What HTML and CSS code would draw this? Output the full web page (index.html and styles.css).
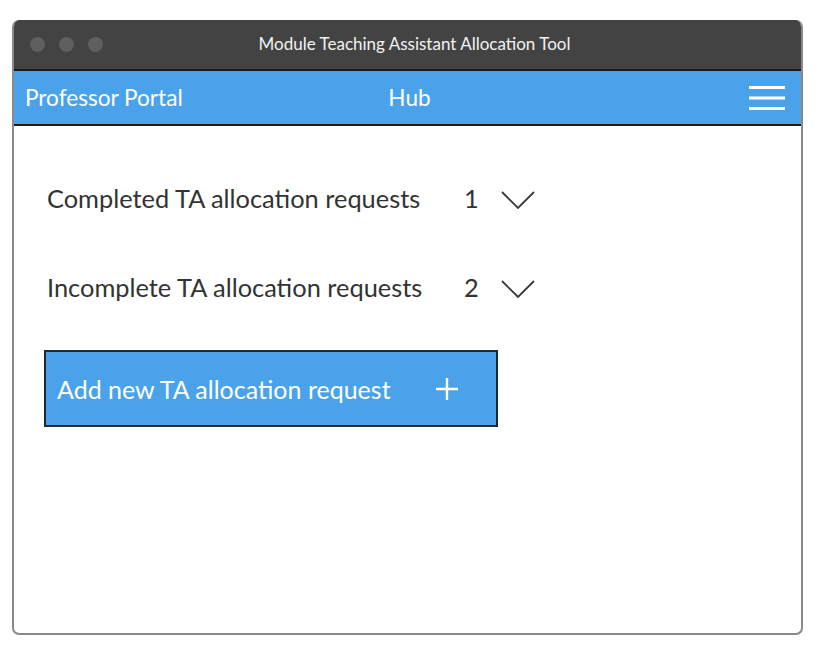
FILE: index.html
```html
<!DOCTYPE html>
<html lang="en">
<head>
<meta charset="utf-8">
<title>Module Teaching Assistant Allocation Tool</title>
<link rel="stylesheet" href="styles.css">
</head>
<body>
<div class="window">
  <div class="titlebar">
    <div class="lights">
      <span class="light"></span><span class="light"></span><span class="light"></span>
    </div>
    <div class="title">Module Teaching Assistant Allocation Tool</div>
  </div>
  <div class="navbar">
    <div class="brand">Professor Portal</div>
    <div class="page">Hub</div>
    <svg class="menu" width="36" height="26" viewBox="0 0 36 26">
      <rect x="0" y="0" width="36" height="3" fill="#fff"/>
      <rect x="0" y="10.5" width="36" height="3" fill="#fff"/>
      <rect x="0" y="21" width="36" height="3" fill="#fff"/>
    </svg>
  </div>
  <div class="content">
    <div class="row">
      <span class="label">Completed TA allocation requests</span>
      <span class="count">1</span>
      <svg class="chev" width="36" height="20" viewBox="0 0 36 20"><path d="M2 2 L18 18 L34 2" fill="none" stroke="#3a3a3a" stroke-width="1.8"/></svg>
    </div>
    <div class="row">
      <span class="label">Incomplete TA allocation requests</span>
      <span class="count">2</span>
      <svg class="chev" width="36" height="20" viewBox="0 0 36 20"><path d="M2 2 L18 18 L34 2" fill="none" stroke="#3a3a3a" stroke-width="1.8"/></svg>
    </div>
    <button class="add">
      <span>Add new TA allocation request</span>
      <svg width="24" height="24" viewBox="0 0 24 24"><path d="M12 1 V23 M1 12 H23" stroke="#fff" stroke-width="2.4"/></svg>
    </button>
  </div>
</div>
</body>
</html>
```

FILE: styles.css
```css
* { box-sizing: border-box; }
body {
  margin: 0;
  background: #fff;
  font-family: "Source Sans Pro", Lato, "Open Sans", sans-serif;
}
.window {
  margin: 20px 0 0 12px;
  width: 791px;
  height: 615px;
  border: 2px solid #8a8a8a;
  border-top: none;
  border-radius: 7px;
  overflow: hidden;
  display: flex;
  flex-direction: column;
  background: #fff;
}
.titlebar {
  height: 49px;
  background: #434343;
  display: flex;
  align-items: center;
  position: relative;
  padding-left: 16px;
}
.lights { display: flex; gap: 14px; }
.light {
  width: 15px; height: 15px; border-radius: 50%;
  background: #5f5f5f;
}
.title {
  position: absolute;
  left: 0; right: 0;
  top: 13px;
  text-align: center;
  color: #f2f2f2;
  font-size: 17px;
  padding-left: 14px;
}
.navbar {
  height: 57px;
  margin: 0 -2px;
  background: #4aa3ea;
  border: 2px solid #1b1b1b;
  display: flex;
  align-items: center;
  position: relative;
  padding: 0 16px 0 11px;
  color: #fff;
}
.brand { font-size: 22.6px; flex: 1; }
.page {
  position: absolute; left: 0; right: 0;
  text-align: center; font-size: 22.6px;
  padding-left: 4px;
}
.menu { position: relative; top: 1px; }
.content {
  padding: 52px 0 0 33px;
  display: flex;
  flex-direction: column;
  align-items: flex-start;
}
.row {
  display: flex;
  align-items: center;
  height: 40px;
  color: #333;
  font-size: 25.4px;
}
.row + .row { margin-top: 49px; }
.label { width: 417px; }
.count { width: 36px; }
.chev { margin-top: 4px; }
.add {
  margin-top: 43px;
  margin-left: -3px;
  width: 454px;
  height: 77px;
  background: #4aa3ea;
  border: 2px solid #1d2a36;
  color: #fff;
  font-family: inherit;
  font-size: 25px;
  display: flex;
  align-items: center;
  padding: 0 0 0 11px;
  cursor: pointer;
}
.add span { width: 378px; text-align: left; }
```
